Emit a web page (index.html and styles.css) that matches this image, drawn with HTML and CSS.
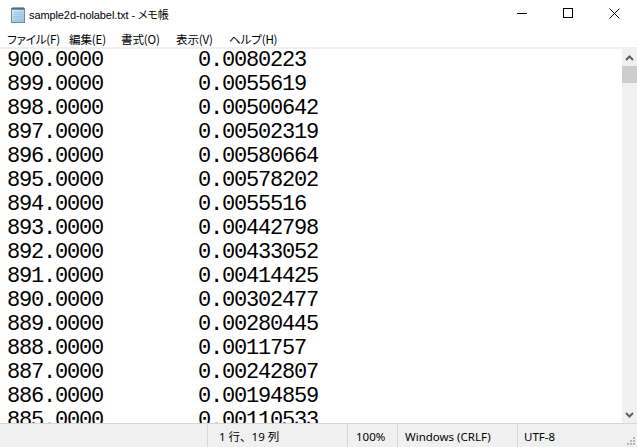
FILE: index.html
```html
<!DOCTYPE html>
<html lang="ja">
<head>
<meta charset="utf-8">
<title>sample2d-nolabel.txt - メモ帳</title>
<link rel="stylesheet" href="styles.css">
</head>
<body>
<div class="window">
  <div class="titlebar">
    <svg class="app-icon" width="14" height="17" viewBox="0 0 14 17">
      <defs>
        <linearGradient id="pg" x1="0" y1="0" x2="1" y2="1">
          <stop offset="0" stop-color="#d9ecf8"/>
          <stop offset="1" stop-color="#8fbfdc"/>
        </linearGradient>
      </defs>
      <rect x="0.5" y="2.5" width="13" height="14" fill="url(#pg)" stroke="#5e8fae"/>
      <path d="M2.5 6.5h9M2.5 8.5h9M2.5 10.5h9M2.5 12.5h9M2.5 14.5h7" stroke="#9fc6de" stroke-width="1"/>
      <path d="M2 1v3M4 1v3M6 1v3M8 1v3M10 1v3M12 1v3" stroke="#3a4a58" stroke-width="1"/>
    </svg>
    <span class="title">sample2d-nolabel.txt - メモ帳</span>
    <div class="controls">
      <div class="ctl"><svg width="10" height="10" viewBox="0 0 10 10"><path d="M0 5.5h10" stroke="#000" stroke-width="1"/></svg></div>
      <div class="ctl"><svg width="10" height="10" viewBox="0 0 10 10"><rect x="0.5" y="0.5" width="9" height="9" fill="none" stroke="#000"/></svg></div>
      <div class="ctl"><svg width="11" height="11" viewBox="0 0 11 11"><path d="M0.5 0.5l10 10M10.5 0.5l-10 10" stroke="#000" stroke-width="1"/></svg></div>
    </div>
  </div>
  <div class="menubar">
    <span class="menu">ファイル(F)</span>
    <span class="menu">編集(E)</span>
    <span class="menu">書式(O)</span>
    <span class="menu">表示(V)</span>
    <span class="menu">ヘルプ(H)</span>
  </div>
  <div class="body">
    <div class="editor">
      <div class="row"><span>900.0000</span><span>0.0080223</span></div>
      <div class="row"><span>899.0000</span><span>0.0055619</span></div>
      <div class="row"><span>898.0000</span><span>0.00500642</span></div>
      <div class="row"><span>897.0000</span><span>0.00502319</span></div>
      <div class="row"><span>896.0000</span><span>0.00580664</span></div>
      <div class="row"><span>895.0000</span><span>0.00578202</span></div>
      <div class="row"><span>894.0000</span><span>0.0055516</span></div>
      <div class="row"><span>893.0000</span><span>0.00442798</span></div>
      <div class="row"><span>892.0000</span><span>0.00433052</span></div>
      <div class="row"><span>891.0000</span><span>0.00414425</span></div>
      <div class="row"><span>890.0000</span><span>0.00302477</span></div>
      <div class="row"><span>889.0000</span><span>0.00280445</span></div>
      <div class="row"><span>888.0000</span><span>0.0011757</span></div>
      <div class="row"><span>887.0000</span><span>0.00242807</span></div>
      <div class="row"><span>886.0000</span><span>0.00194859</span></div>
      <div class="row"><span>885.0000</span><span>0.00110533</span></div>
    </div>
    <div class="scrollbar">
      <div class="arrow"><svg width="9" height="6" viewBox="0 0 9 6"><path d="M1 5l3.5-3.5L8 5" fill="none" stroke="#606060" stroke-width="2"/></svg></div>
      <div class="thumb"></div>
      <div class="track"></div>
      <div class="arrow"><svg width="9" height="6" viewBox="0 0 9 6"><path d="M1 1l3.5 3.5L8 1" fill="none" stroke="#606060" stroke-width="2"/></svg></div>
    </div>
  </div>
  <div class="statusbar">
    <div class="cell cell-empty"></div>
    <div class="cell cell-pos">1 行、19 列</div>
    <div class="cell cell-zoom">100%</div>
    <div class="cell cell-eol">Windows (CRLF)</div>
    <div class="cell cell-enc">UTF-8
      <svg class="grip" width="9" height="9" viewBox="0 0 9 9">
        <rect x="6" y="0" width="2" height="2" fill="#b5b5b5"/>
        <rect x="3" y="3" width="2" height="2" fill="#b5b5b5"/>
        <rect x="6" y="3" width="2" height="2" fill="#b5b5b5"/>
        <rect x="0" y="6" width="2" height="2" fill="#b5b5b5"/>
        <rect x="3" y="6" width="2" height="2" fill="#b5b5b5"/>
        <rect x="6" y="6" width="2" height="2" fill="#b5b5b5"/>
      </svg>
    </div>
  </div>
</div>
</body>
</html>
```
FILE: styles.css
```css
html, body {
  margin: 0;
  padding: 0;
  background: #ffffff;
}
.window {
  width: 637px;
  height: 447px;
  display: flex;
  flex-direction: column;
  overflow: hidden;
  font-family: "Noto Sans", "Noto Sans CJK JP", sans-serif;
  font-size: 12px;
  color: #000;
}
.titlebar {
  height: 30px;
  display: flex;
  align-items: center;
  background: #fff;
  flex: none;
}
.app-icon {
  margin-left: 11px;
  margin-right: 4px;
  margin-top: -1px;
}
.title {
  font-family: "Liberation Sans", "Noto Sans CJK JP", sans-serif;
  font-size: 11px;
  letter-spacing: -0.1px;
  font-feature-settings: "palt";
  margin-top: -3px;
}
.controls {
  margin-left: auto;
  display: flex;
  height: 30px;
}
.ctl {
  width: 46px;
  height: 30px;
  display: flex;
  align-items: center;
  justify-content: center;
  margin-top: -2px;
}
.menubar {
  height: 17px;
  display: grid;
  grid-template-columns: 62px 52px 55px 53px auto;
  align-items: center;
  padding-left: 7px;
  flex: none;
  border-bottom: 2px solid #f0f0f0;
}
.menu {
  font-family: "Noto Sans CJK JP", sans-serif;
  font-size: 11.6px;
  font-feature-settings: "palt";
  letter-spacing: -0.2px;
  white-space: nowrap;
  margin-top: 1px;
}
.body {
  flex: 1;
  display: flex;
  min-height: 0;
}
.editor {
  flex: 1;
  overflow: hidden;
  padding-left: 7px;
  font-family: "Liberation Mono", monospace;
  font-size: 22px;
  letter-spacing: -1.2px;
  line-height: 24px;
}
.row {
  display: grid;
  grid-template-columns: 191px auto;
  height: 24px;
  white-space: pre;
}
.scrollbar {
  width: 15px;
  flex: none;
  background: #f0f0f0;
  display: flex;
  flex-direction: column;
}
.arrow {
  height: 17px;
  display: flex;
  align-items: center;
  justify-content: center;
  flex: none;
}
.thumb {
  height: 17px;
  background: #cdcdcd;
  flex: none;
}
.track {
  flex: 1;
}
.statusbar {
  height: 23px;
  flex: none;
  background: #f0f0f0;
  border-top: 1px solid #d7d7d7;
  display: grid;
  grid-template-columns: 207px 140px 50px 120px 1fr;
  font-family: "Noto Sans", "Noto Sans CJK JP", sans-serif;
  font-size: 11.5px;
}
.cell {
  display: flex;
  align-items: center;
  border-left: 1px solid #d7d7d7;
  padding-top: 1px;
  white-space: nowrap;
  position: relative;
}
.cell-empty {
  border-left: none;
}
.cell-pos {
  padding-left: 11px;
}
.cell-zoom {
  padding-left: 8px;
}
.cell-eol {
  padding-left: 7px;
}
.cell-enc {
  padding-left: 6px;
}
.grip {
  position: absolute;
  right: 1px;
  bottom: 1px;
}
```
